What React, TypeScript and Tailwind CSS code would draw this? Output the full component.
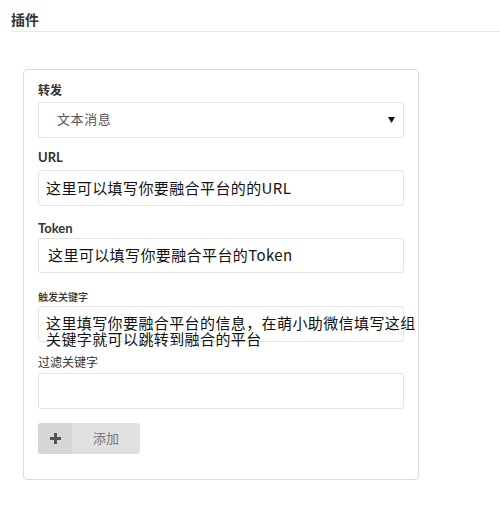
import * as React from 'react';

const cjk = "font-['Lato','Noto_Sans_CJK_SC',sans-serif]";

export default function App() {
  return (
    <div className={`w-[500px] h-[510px] bg-white relative overflow-hidden ${cjk}`}>
      <div className="ml-[11px] h-[32px] pt-[11px] border-b border-[#e8e8e8]">
        <h2 className="text-[14px] leading-[18px] font-bold text-[#333]">插件</h2>
      </div>

      <div className="mt-[37px] ml-[23px] w-[396px] h-[411px] border border-[#dcdcdc] rounded-[4px] px-[14px] pt-[13px]">
        {/* 转发 */}
        <label className="block text-[12px] leading-[16px] font-bold text-[#333]">转发</label>
        <div className="mt-[3px] h-[36px] border border-[#e3e3e3] rounded-[3px] flex items-center justify-between pl-[18px] pr-[8px]">
          <span className="text-[13px] tracking-[0.6px] text-[#555]">文本消息</span>
          <svg width="7" height="6" viewBox="0 0 7 6">
            <path d="M0 0 H7 L3.5 6 Z" fill="#111" />
          </svg>
        </div>

        {/* URL */}
        <label className="block mt-[11px] text-[13px] leading-[16px] font-bold text-[#333]">URL</label>
        <div className="mt-[5px] h-[36px] border border-[#e3e3e3] rounded-[3px] flex items-center pl-[7px]">
          <span className="text-[15px] tracking-[0.4px] text-[#111] font-['Noto_Sans_CJK_SC',sans-serif]">这里可以填写你要融合平台的的URL</span>
        </div>

        {/* Token */}
        <label className="block mt-[14px] text-[13px] leading-[16px] font-bold text-[#333]">Token</label>
        <div className="mt-[2px] h-[35px] border border-[#e3e3e3] rounded-[3px] flex items-center pl-[9px]">
          <span className="text-[15px] tracking-[0.4px] text-[#111] font-['Noto_Sans_CJK_SC',sans-serif]">这里可以填写你要融合平台的Token</span>
        </div>

        {/* 触发关键字 */}
        <label className="block mt-[16px] text-[10px] leading-[16px] font-medium text-[#333]">触发关键字</label>
        <div className="mt-[1px] h-[36px] border border-[#e3e3e3] rounded-[3px] pl-[7px] pt-[8px]">
          <p className="w-[375px] text-[15px] leading-[16px] tracking-[0.4px] text-[#111] font-['Noto_Sans_CJK_SC',sans-serif]">
            这里填写你要融合平台的信息，在萌小助微信填写这组关键字就可以跳转到融合的平台
          </p>
        </div>

        {/* 过滤关键字 */}
        <label className="block mt-[13px] text-[12px] leading-[16px] text-[#333]">过滤关键字</label>
        <div className="mt-[2px] h-[36px] border border-[#e3e3e3] rounded-[3px]" />

        <button className="mt-[14px] h-[31px] w-[102px] flex rounded-[3px] overflow-hidden">
          <span className="w-[34px] h-full bg-[#d6d6d6] flex items-center justify-center">
            <svg width="11" height="11" viewBox="0 0 11 11">
              <path d="M4 0 H7 V4 H11 V7 H7 V11 H4 V7 H0 V4 H4 Z" fill="#555" />
            </svg>
          </span>
          <span className="flex-1 h-full bg-[#e0e0e0] flex items-center justify-center text-[13px] text-[#777]">添加</span>
        </button>
      </div>
    </div>
  );
}
